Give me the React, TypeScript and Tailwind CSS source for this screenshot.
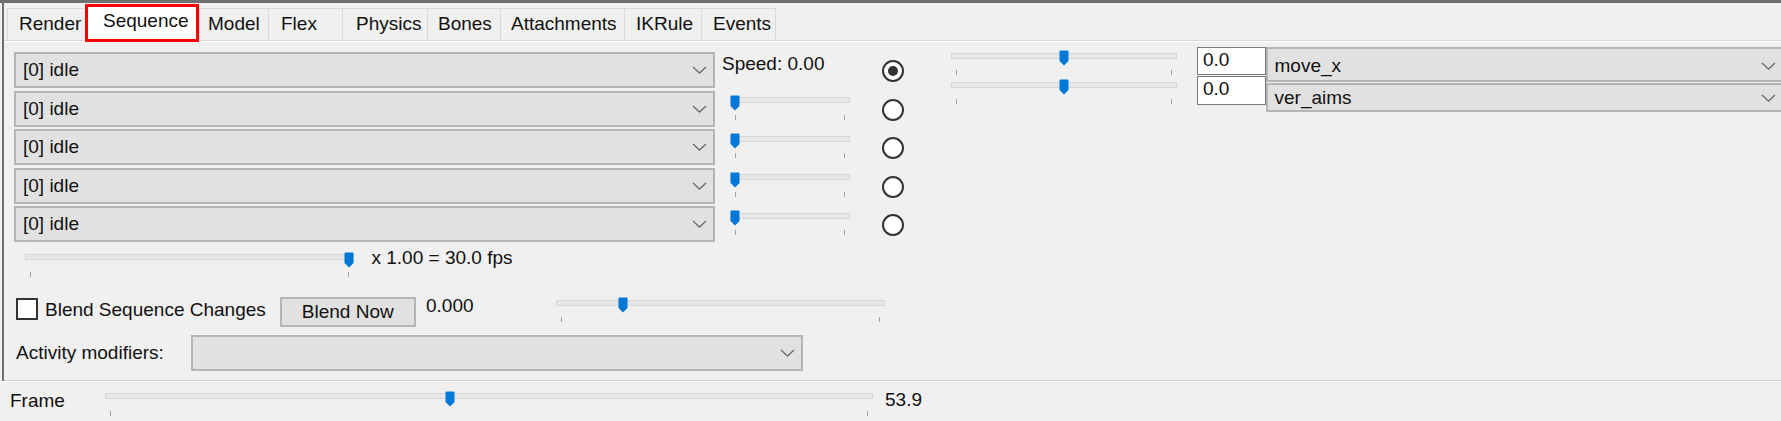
import React from "react"

const tabs = [
  { label: "Render", w: "w-[78px]", pl: "pl-[11px]" },
  { label: "Sequence", w: "w-[114px]", pl: "pl-[15px]", active: true },
  { label: "Model", w: "w-[69px]", pl: "pl-[8px]" },
  { label: "Flex", w: "w-[74px]", pl: "pl-[12px]" },
  { label: "Physics", w: "w-[85px]", pl: "pl-[13px]" },
  { label: "Bones", w: "w-[73px]", pl: "pl-[10px]" },
  { label: "Attachments", w: "w-[124px]", pl: "pl-[10px]" },
  { label: "IKRule", w: "w-[77px]", pl: "pl-[11px]" },
  { label: "Events", w: "w-[75px]", pl: "pl-[11px]" },
]

function Chevron() {
  return (
    <svg width="15" height="8" viewBox="0 0 15 8" className="shrink-0">
      <polyline points="1,1 7.5,7 14,1" fill="none" stroke="#6a6a6a" strokeWidth="1.3" />
    </svg>
  )
}

function Combo({ text, className }: { text?: string; className: string }) {
  return (
    <div
      className={`flex shrink-0 items-center justify-between border-2 border-[#b5b5b5] bg-[#e1e1e1] pr-[6px] pl-[7px] ${className}`}
    >
      <span className="leading-[22px]">{text}</span>
      <Chevron />
    </div>
  )
}

// thumb position comes from the value, ticks sit 5px in from each end
function Slider({ value, className }: { value: number; className: string }) {
  return (
    <div className={`relative h-[26px] shrink-0 ${className}`}>
      <div className="absolute top-[2.5px] right-0 left-0 h-[6px] border border-[#d6d6d6] bg-[#e7e7e7]" />
      <div className="absolute top-[20px] left-[5px] h-[5px] w-px bg-[#a0a0a0]" />
      <div className="absolute top-[20px] right-[5px] h-[5px] w-px bg-[#a0a0a0]" />
      <svg
        width="10"
        height="16"
        viewBox="0 0 10 16"
        className="absolute top-0"
        style={{ left: `calc(${value} * (100% - 10px))` }}
      >
        <path d="M1.5 0.5 H8.5 Q9.5 0.5 9.5 1.5 V11 L5 15.5 L0.5 11 V1.5 Q0.5 0.5 1.5 0.5 Z" fill="#0078d7" />
      </svg>
    </div>
  )
}

function Radio({ checked }: { checked?: boolean }) {
  return (
    <div className="flex h-[38.5px] items-center">
      <div className="flex h-[22px] w-[22px] items-center justify-center rounded-full border-2 border-[#333] bg-white">
        {checked && <div className="h-[10px] w-[10px] rounded-full bg-[#333]" />}
      </div>
    </div>
  )
}

export default function App() {
  return (
    <div className="flex h-[421px] w-[1781px] flex-col overflow-hidden bg-[#f0f0f0] font-['Liberation_Sans',Arial,sans-serif] text-[19px] text-[#111]">
      <div className="h-[3px] shrink-0 bg-[#6f6f6f]" />

      <div className="flex h-[378px] shrink-0">
        <div className="w-[2px] shrink-0" />
        <div className="w-[2px] shrink-0 bg-[#6f6f6f]" />

        <div className="flex min-w-0 flex-1 flex-col">
          {/* tab strip */}
          <div className="flex h-[37px] shrink-0 items-end pl-[3px]">
            {tabs.map((t) =>
              t.active ? (
                <div
                  key={t.label}
                  className={`relative z-10 mb-[-2px] flex h-[38px] shrink-0 items-center border-[3px] border-[#ff0000] bg-white pb-[3px] ${t.w} ${t.pl}`}
                >
                  {t.label}
                </div>
              ) : (
                <div
                  key={t.label}
                  className={`flex h-[32px] shrink-0 items-center border-t border-l border-[#d9d9d9] last:border-r ${t.w} ${t.pl}`}
                >
                  {t.label}
                </div>
              ),
            )}
          </div>

          {/* tab panel */}
          <div className="flex flex-1 flex-col overflow-hidden border-t border-b border-t-[#d9d9d9] border-b-[#d0d0d0] pt-[11px] pl-[10px] shadow-[inset_0_1px_0_#ffffff]">
            <div className="flex items-start">
              <div className="flex w-[701px] shrink-0 flex-col gap-[2.5px]">
                {[0, 1, 2, 3, 4].map((i) => (
                  <Combo key={i} text="[0] idle" className="h-[36px]" />
                ))}
              </div>

              <div className="ml-[7px] flex w-[128px] shrink-0 flex-col">
                <div className="h-[38.5px] pt-[1px] leading-[22px]">Speed: 0.00</div>
                {[0, 1, 2, 3].map((i) => (
                  <div key={i} className="h-[38.5px] pt-[4px] pl-[8px]">
                    <Slider value={0} className="w-[120px]" />
                  </div>
                ))}
              </div>

              <div className="ml-[32px] flex shrink-0 flex-col">
                <Radio checked />
                <Radio />
                <Radio />
                <Radio />
                <Radio />
              </div>

              <div className="mt-[-2px] ml-[46.5px] flex w-[226px] shrink-0 flex-col gap-[3px]">
                <Slider value={0.5} className="w-[226px]" />
                <Slider value={0.5} className="w-[226px]" />
              </div>

              <div className="mt-[-5.5px] ml-[20.5px] flex shrink-0">
                <div className="flex w-[68.5px] shrink-0 flex-col gap-[1px]">
                  <div className="h-[28.5px] border border-[#7a7a7a] bg-white pl-[5px] leading-[24px]">0.0</div>
                  <div className="h-[28.5px] border border-[#7a7a7a] bg-white pl-[5px] leading-[24px]">0.0</div>
                </div>
                <div className="flex w-[518px] shrink-0 flex-col gap-[1.5px]">
                  <Combo text="move_x" className="h-[35px] pt-[3px]" />
                  <Combo text="ver_aims" className="h-[29px]" />
                </div>
              </div>
            </div>

            <div className="mt-[7px] flex items-start">
              <Slider value={1} className="ml-[11px] w-[329px]" />
              <div className="mt-[-5px] ml-[17.5px] leading-[22px]">x 1.00 = 30.0 fps</div>
            </div>

            <div className="mt-[19.5px] flex items-start">
              <div className="mt-[1px] ml-[2px] h-[22px] w-[22px] shrink-0 border-2 border-[#333] bg-white" />
              <div className="mt-[2px] ml-[7px] w-[234.5px] shrink-0 leading-[22px]">Blend Sequence Changes</div>
              <div className="flex h-[29.5px] w-[136.5px] shrink-0 items-center justify-center border-2 border-[#b5b5b5] bg-[#e1e1e1] leading-[22px]">
                Blend Now
              </div>
              <div className="mt-[-2.5px] ml-[10px] w-[129.5px] shrink-0 leading-[22px]">0.000</div>
              <Slider value={0.195} className="w-[329.5px]" />
            </div>

            <div className="mt-[8px] flex items-center">
              <div className="ml-[2px] w-[175px] shrink-0 leading-[22px]">Activity modifiers:</div>
              <Combo className="h-[36px] w-[612px]" />
            </div>
          </div>
        </div>
      </div>

      {/* frame scrubber */}
      <div className="flex h-[40px] shrink-0 items-start border-t border-white pt-[8.5px] pl-[10px]">
        <div className="mt-[-1px] w-[95px] shrink-0 leading-[22px]">Frame</div>
        <Slider value={0.449} className="w-[768px]" />
        <div className="mt-[-2px] ml-[12px] leading-[22px]">53.9</div>
      </div>
    </div>
  )
}
